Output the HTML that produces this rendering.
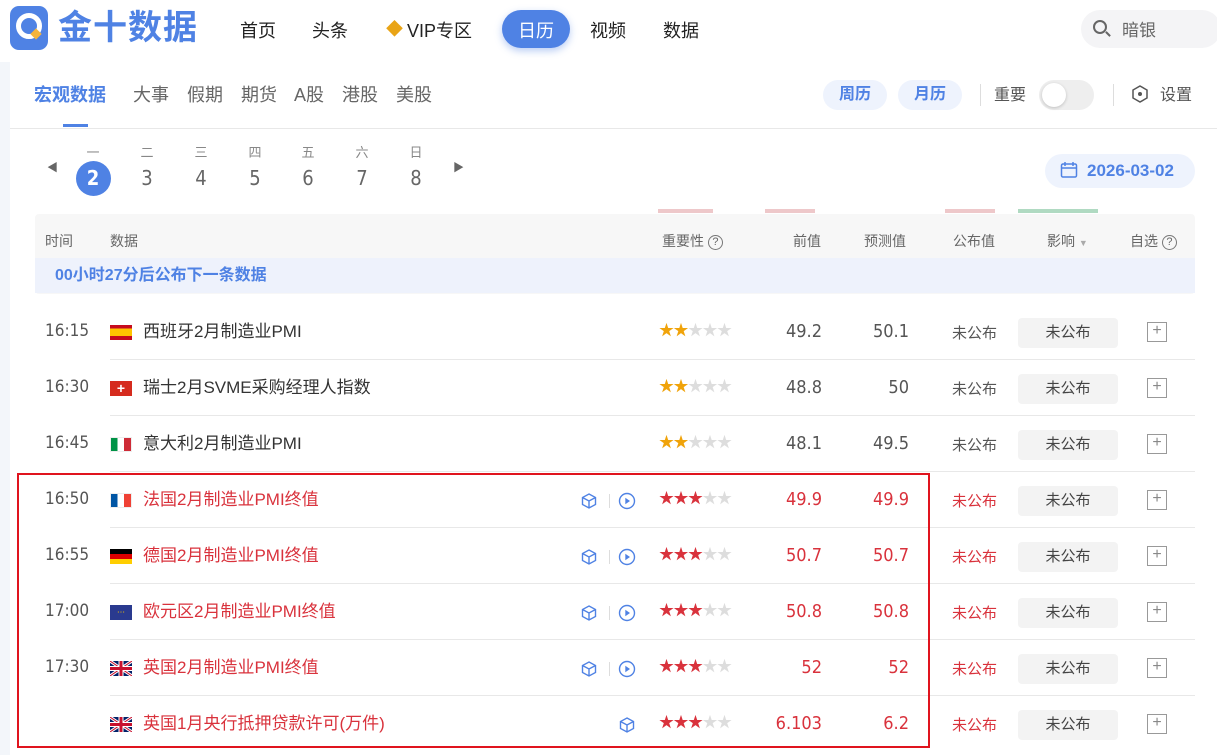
<!DOCTYPE html>
<html><head><meta charset="utf-8"><style>
*{margin:0;padding:0;box-sizing:border-box}
body{width:1217px;height:755px;overflow:hidden;background:#fff;font-family:"Liberation Sans","Noto Sans CJK SC",sans-serif;color:#333;position:relative;line-height:1.2}
.a{position:absolute;white-space:nowrap}
.nav{font-size:18px;color:#222;top:21px}
.tab{font-size:18px;color:#666;top:85px}
.wk{font-size:13px;color:#888;top:145px;width:30px;text-align:center}
.dn{font-size:20px;color:#666;top:166px;width:30px;text-align:center;font-family:"DejaVu Sans Condensed","Liberation Sans",sans-serif}
.th{font-size:14px;color:#666;top:233px}
.row{position:absolute;left:0;width:1217px;height:56px}
.row .sep{position:absolute;left:110px;right:22px;bottom:0;border-bottom:1px solid #e8e8e8}
.t{position:absolute;left:45px;top:17px;font-size:17px;color:#555;font-family:"DejaVu Sans Condensed","Liberation Sans",sans-serif}
.fl{position:absolute;left:110px;top:21px;width:22px;height:15px;overflow:hidden}
.nm{position:absolute;left:143px;top:18px;font-size:17px;color:#333}
.red .nm{color:#d9323c}
.st{position:absolute;left:659px;top:18px;font-size:15px;letter-spacing:-0.5px;color:#ddd}
.st b{color:#f0a30a;font-weight:normal}
.red .st b{color:#d9323c}
.pv,.fc{position:absolute;top:17px;font-size:18px;color:#555;text-align:right;width:80px;font-family:"DejaVu Sans Condensed","Liberation Sans",sans-serif}
.pv{left:742px}.fc{left:829px}
.red .pv,.red .fc{color:#d9323c}
.pb{position:absolute;left:952px;top:21px;font-size:15px;color:#555}
.red .pb{color:#d9323c}
.im{position:absolute;left:1018px;top:14px;width:100px;height:30px;background:#f3f3f3;border-radius:4px;font-size:15px;color:#444;text-align:center;line-height:29px}
.pl{position:absolute;left:1147px;top:18px;width:20px;height:20px;border:1.5px solid #999;color:#888;font-size:16px;line-height:16px;text-align:center}
.ic{position:absolute;top:20px;width:18px;height:18px}
</style></head><body>
<div class="a" style="left:10px;top:6px;width:38px;height:44px;border-radius:9px;background:#4f82e4"></div>
<div class="a" style="left:16px;top:13px;width:26px;height:26px;border-radius:50%;border:5px solid #fff"></div>
<div class="a" style="left:32px;top:30px;width:8px;height:8px;background:#f5b43c;transform:rotate(45deg)"></div>
<div class="a" style="left:58px;top:8px;font-size:34px;font-weight:bold;color:#4f82e4;letter-spacing:1px">金十数据</div>
<div class="a nav" style="left:240px">首页</div>
<div class="a nav" style="left:312px">头条</div>
<div class="a" style="left:386px;top:20px;font-size:17px;color:#e9a416">◆</div>
<div class="a nav" style="left:407px">VIP专区</div>
<div class="a" style="left:502px;top:10px;width:68px;height:38px;border-radius:19px;background:#4f82e4;box-shadow:0 3px 8px rgba(79,130,228,.4)"></div>
<div class="a nav" style="left:518px;color:#fff">日历</div>
<div class="a nav" style="left:590px">视频</div>
<div class="a nav" style="left:663px">数据</div>
<div class="a" style="left:1081px;top:10px;width:140px;height:38px;border-radius:19px;background:#f4f4f6"></div>
<div class="a" style="left:1093px;top:20px;width:14px;height:14px;border:2px solid #666;border-radius:50%"></div>
<div class="a" style="left:1105px;top:33px;width:6px;height:2px;background:#666;transform:rotate(45deg)"></div>
<div class="a" style="left:1122px;top:21px;font-size:17px;color:#666">暗银</div>
<div class="a" style="left:0;top:62px;width:10px;height:693px;background:#f3f6fa"></div>
<div class="a tab" style="left:34px;color:#4f82e4;font-weight:bold">宏观数据</div>
<div class="a tab" style="left:133px">大事</div>
<div class="a tab" style="left:187px">假期</div>
<div class="a tab" style="left:241px">期货</div>
<div class="a tab" style="left:294px">A股</div>
<div class="a tab" style="left:342px">港股</div>
<div class="a tab" style="left:396px">美股</div>
<div class="a" style="left:63px;top:124px;width:25px;height:3px;background:#4f82e4"></div>
<div class="a" style="left:10px;top:128px;width:1207px;border-top:1px solid #e8e8e8"></div>
<div class="a" style="left:823px;top:80px;width:64px;height:30px;border-radius:15px;background:#eef3fd;color:#4f82e4;font-size:16px;font-weight:bold;text-align:center;line-height:30px">周历</div>
<div class="a" style="left:898px;top:80px;width:64px;height:30px;border-radius:15px;background:#eef3fd;color:#4f82e4;font-size:16px;font-weight:bold;text-align:center;line-height:30px">月历</div>
<div class="a" style="left:980px;top:84px;height:22px;border-left:1px solid #ddd"></div>
<div class="a" style="left:994px;top:86px;font-size:16px;color:#555">重要</div>
<div class="a" style="left:1039px;top:80px;width:55px;height:30px;border-radius:15px;background:#eee"></div>
<div class="a" style="left:1042px;top:83px;width:24px;height:24px;border-radius:50%;background:#fff;box-shadow:0 1px 3px rgba(0,0,0,.2)"></div>
<div class="a" style="left:1113px;top:84px;height:22px;border-left:1px solid #ddd"></div>
<svg class="a" style="left:1130px;top:84px" width="20" height="20" viewBox="0 0 20 20"><path d="M10 2 17 6v8l-7 4-7-4V6z" fill="none" stroke="#555" stroke-width="1.5"/><circle cx="10" cy="10" r="2" fill="#555"/></svg>
<div class="a" style="left:1160px;top:86px;font-size:16px;color:#555">设置</div>
<div class="a" style="left:47px;top:162px;font-size:11px;color:#666">◀</div>
<div class="a" style="left:453px;top:162px;font-size:11px;color:#666">▶</div>
<div class="a wk" style="left:78px">一</div><div class="a wk" style="left:132px">二</div><div class="a wk" style="left:186px">三</div><div class="a wk" style="left:240px">四</div><div class="a wk" style="left:293px">五</div><div class="a wk" style="left:347px">六</div><div class="a wk" style="left:401px">日</div>
<div class="a" style="left:76px;top:161px;width:35px;height:35px;border-radius:50%;background:#4f82e4"></div>
<div class="a dn" style="left:78px;color:#fff;font-weight:bold">2</div><div class="a dn" style="left:132px">3</div><div class="a dn" style="left:186px">4</div><div class="a dn" style="left:240px">5</div><div class="a dn" style="left:293px">6</div><div class="a dn" style="left:347px">7</div><div class="a dn" style="left:401px">8</div>
<div class="a" style="left:1045px;top:154px;width:150px;height:34px;border-radius:17px;background:#eef3fd"></div>
<svg class="a" style="left:1060px;top:161px" width="18" height="18" viewBox="0 0 18 18"><rect x="1.5" y="3" width="15" height="13" rx="1.5" fill="none" stroke="#4f82e4" stroke-width="1.5"/><path d="M1.5 7h15M5 1v4M13 1v4" stroke="#4f82e4" stroke-width="1.5"/></svg>
<div class="a" style="left:1087px;top:161px;font-size:17px;font-weight:bold;color:#4f82e4">2026-03-02</div>
<div class="a" style="left:45px;top:209px;width:1150px;height:4px;overflow:hidden;opacity:.6">
<div class="a" style="left:613px;top:0;width:55px;height:4px;background:#e3a5a8"></div>
<div class="a" style="left:720px;top:0;width:50px;height:4px;background:#e3a5a8"></div>
<div class="a" style="left:900px;top:0;width:50px;height:4px;background:#e3a5a8"></div>
<div class="a" style="left:973px;top:0;width:80px;height:4px;background:#7cc39a"></div>
</div>
<div class="a" style="left:35px;top:214px;width:1160px;height:80px;background:#f7f7f7;border-radius:4px"></div>
<div class="a th" style="left:45px">时间</div>
<div class="a th" style="left:110px">数据</div>
<div class="a th" style="left:662px">重要性 <span style="display:inline-block;width:15px;height:15px;border:1px solid #777;border-radius:50%;font-size:11px;text-align:center;line-height:13px;vertical-align:1px">?</span></div>
<div class="a th" style="left:793px">前值</div>
<div class="a th" style="left:864px">预测值</div>
<div class="a th" style="left:953px">公布值</div>
<div class="a th" style="left:1047px">影响 <span style="font-size:9px;color:#aaa">▼</span></div>
<div class="a th" style="left:1130px">自选 <span style="display:inline-block;width:15px;height:15px;border:1px solid #777;border-radius:50%;font-size:11px;text-align:center;line-height:13px;vertical-align:1px">?</span></div>
<div class="a" style="left:35px;top:258px;width:1160px;height:35px;background:#eef2fc"></div>
<div class="a" style="left:55px;top:266px;font-size:16px;font-weight:bold;color:#4f82e4">00小时27分后公布下一条数据</div>

<div class="row" style="top:304px"><div class="sep"></div><div class="t">16:15</div>
<div class="fl" style="background:linear-gradient(#c60b1e 25%,#ffc400 25%,#ffc400 75%,#c60b1e 75%)"></div>
<div class="nm">西班牙2月制造业PMI</div><div class="st"><b>★★</b>★★★</div><div class="pv">49.2</div><div class="fc">50.1</div><div class="pb">未公布</div><div class="im">未公布</div><div class="pl">+</div></div>

<div class="row" style="top:360px"><div class="sep"></div><div class="t">16:30</div>
<div class="fl" style="background:#d52b1e;color:#fff;font-size:14px;line-height:15px;text-align:center;font-weight:bold">+</div>
<div class="nm">瑞士2月SVME采购经理人指数</div><div class="st"><b>★★</b>★★★</div><div class="pv">48.8</div><div class="fc">50</div><div class="pb">未公布</div><div class="im">未公布</div><div class="pl">+</div></div>

<div class="row" style="top:416px"><div class="sep"></div><div class="t">16:45</div>
<div class="fl" style="background:linear-gradient(90deg,#009246 33%,#fff 33%,#fff 66%,#ce2b37 66%);border:1px solid #eee"></div>
<div class="nm">意大利2月制造业PMI</div><div class="st"><b>★★</b>★★★</div><div class="pv">48.1</div><div class="fc">49.5</div><div class="pb">未公布</div><div class="im">未公布</div><div class="pl">+</div></div>

<div class="row red" style="top:472px"><div class="sep"></div><div class="t">16:50</div>
<div class="fl" style="background:linear-gradient(90deg,#0055a4 33%,#fff 33%,#fff 66%,#ef4135 66%);border:1px solid #eee"></div>
<div class="nm">法国2月制造业PMI终值</div>
<svg class="ic" style="left:580px" viewBox="0 0 18 18"><path d="M9 2 15.5 5.5v7L9 16 2.5 12.5v-7zM2.5 5.5 9 9l6.5-3.5M9 9v7" fill="none" stroke="#4f82e4" stroke-width="1.4"/></svg>
<div class="a" style="left:609px;top:22px;height:14px;border-left:1px solid #ddd"></div>
<svg class="ic" style="left:618px" viewBox="0 0 18 18"><circle cx="9" cy="9" r="7.5" fill="none" stroke="#4f82e4" stroke-width="1.4"/><path d="M7.3 5.8v6.4L12 9z" fill="#4f82e4"/></svg>
<div class="st"><b>★★★</b>★★</div><div class="pv">49.9</div><div class="fc">49.9</div><div class="pb">未公布</div><div class="im">未公布</div><div class="pl">+</div></div>

<div class="row red" style="top:528px"><div class="sep"></div><div class="t">16:55</div>
<div class="fl" style="background:linear-gradient(#000 33%,#dd0000 33%,#dd0000 66%,#ffce00 66%)"></div>
<div class="nm">德国2月制造业PMI终值</div>
<svg class="ic" style="left:580px" viewBox="0 0 18 18"><path d="M9 2 15.5 5.5v7L9 16 2.5 12.5v-7zM2.5 5.5 9 9l6.5-3.5M9 9v7" fill="none" stroke="#4f82e4" stroke-width="1.4"/></svg>
<div class="a" style="left:609px;top:22px;height:14px;border-left:1px solid #ddd"></div>
<svg class="ic" style="left:618px" viewBox="0 0 18 18"><circle cx="9" cy="9" r="7.5" fill="none" stroke="#4f82e4" stroke-width="1.4"/><path d="M7.3 5.8v6.4L12 9z" fill="#4f82e4"/></svg>
<div class="st"><b>★★★</b>★★</div><div class="pv">50.7</div><div class="fc">50.7</div><div class="pb">未公布</div><div class="im">未公布</div><div class="pl">+</div></div>

<div class="row red" style="top:584px"><div class="sep"></div><div class="t">17:00</div>
<div class="fl" style="background:#2a3a8f;color:#f5c400;font-size:8px;line-height:15px;text-align:center">⋯</div>
<div class="nm">欧元区2月制造业PMI终值</div>
<svg class="ic" style="left:580px" viewBox="0 0 18 18"><path d="M9 2 15.5 5.5v7L9 16 2.5 12.5v-7zM2.5 5.5 9 9l6.5-3.5M9 9v7" fill="none" stroke="#4f82e4" stroke-width="1.4"/></svg>
<div class="a" style="left:609px;top:22px;height:14px;border-left:1px solid #ddd"></div>
<svg class="ic" style="left:618px" viewBox="0 0 18 18"><circle cx="9" cy="9" r="7.5" fill="none" stroke="#4f82e4" stroke-width="1.4"/><path d="M7.3 5.8v6.4L12 9z" fill="#4f82e4"/></svg>
<div class="st"><b>★★★</b>★★</div><div class="pv">50.8</div><div class="fc">50.8</div><div class="pb">未公布</div><div class="im">未公布</div><div class="pl">+</div></div>

<div class="row red" style="top:640px"><div class="sep"></div><div class="t">17:30</div>
<svg class="fl" viewBox="0 0 22 15"><rect width="22" height="15" fill="#012169"/><path d="M0 0 22 15M22 0 0 15" stroke="#fff" stroke-width="3"/><path d="M0 0 22 15M22 0 0 15" stroke="#c8102e" stroke-width="1"/><path d="M11 0v15M0 7.5h22" stroke="#fff" stroke-width="5"/><path d="M11 0v15M0 7.5h22" stroke="#c8102e" stroke-width="3"/></svg>
<div class="nm">英国2月制造业PMI终值</div>
<svg class="ic" style="left:580px" viewBox="0 0 18 18"><path d="M9 2 15.5 5.5v7L9 16 2.5 12.5v-7zM2.5 5.5 9 9l6.5-3.5M9 9v7" fill="none" stroke="#4f82e4" stroke-width="1.4"/></svg>
<div class="a" style="left:609px;top:22px;height:14px;border-left:1px solid #ddd"></div>
<svg class="ic" style="left:618px" viewBox="0 0 18 18"><circle cx="9" cy="9" r="7.5" fill="none" stroke="#4f82e4" stroke-width="1.4"/><path d="M7.3 5.8v6.4L12 9z" fill="#4f82e4"/></svg>
<div class="st"><b>★★★</b>★★</div><div class="pv">52</div><div class="fc">52</div><div class="pb">未公布</div><div class="im">未公布</div><div class="pl">+</div></div>

<div class="row red" style="top:696px">
<svg class="fl" viewBox="0 0 22 15"><rect width="22" height="15" fill="#012169"/><path d="M0 0 22 15M22 0 0 15" stroke="#fff" stroke-width="3"/><path d="M0 0 22 15M22 0 0 15" stroke="#c8102e" stroke-width="1"/><path d="M11 0v15M0 7.5h22" stroke="#fff" stroke-width="5"/><path d="M11 0v15M0 7.5h22" stroke="#c8102e" stroke-width="3"/></svg>
<div class="nm">英国1月央行抵押贷款许可(万件)</div>
<svg class="ic" style="left:618px" viewBox="0 0 18 18"><path d="M9 2 15.5 5.5v7L9 16 2.5 12.5v-7zM2.5 5.5 9 9l6.5-3.5M9 9v7" fill="none" stroke="#4f82e4" stroke-width="1.4"/></svg>
<div class="st"><b>★★★</b>★★</div><div class="pv">6.103</div><div class="fc">6.2</div><div class="pb">未公布</div><div class="im">未公布</div><div class="pl">+</div></div>

<div class="a" style="left:17px;top:473px;width:913px;height:275px;border:2px solid #e0141e"></div>
</body></html>
